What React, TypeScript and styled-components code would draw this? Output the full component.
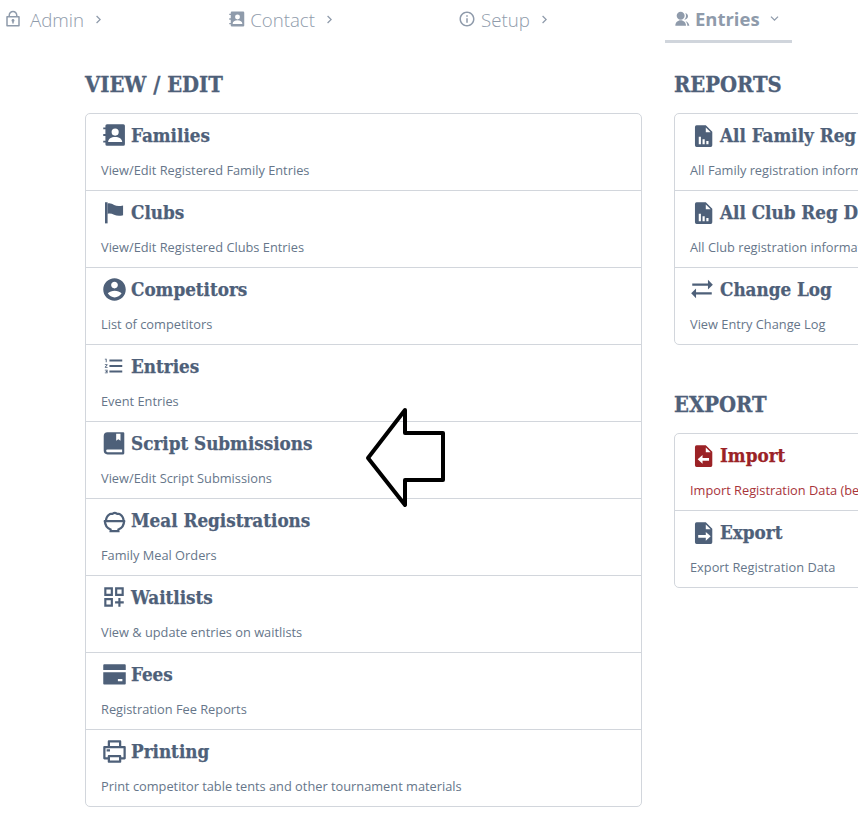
import React from "react";
import styled, { createGlobalStyle } from "styled-components";
import {
  RiAccountCircleFill, RiBankCardFill,
  RiPrinterLine,
  RiLock2Line, RiInformationLine, RiGroupFill, RiArrowRightSLine, RiArrowDownSLine,
} from "react-icons/ri";
import { MdOutlineDashboardCustomize, MdFormatListNumbered } from "react-icons/md";

const Global = createGlobalStyle`
  html, body { margin: 0; padding: 0; background: #fff; }
  body { width: 858px; height: 823px; overflow: hidden; font-family: "Open Sans", sans-serif; }
`;
const Page = styled.div`position: relative; width: 858px; height: 823px; overflow: hidden;`;
const Nav = styled.nav`display: flex; gap: 121px; height: 44px; padding-left: 4px; box-sizing: border-box; white-space: nowrap;`;
const NavItem = styled.div<{ $active?: boolean }>`
  display: flex; align-items: center; height: 40px; padding-bottom: 2px; box-sizing: border-box;
  font-size: 18.7px; color: #8f9bab; flex: none; font-weight: 300;
  ${(p) => p.$active && `font-weight: 700; font-size: 18.5px; margin-left: -8px; padding: 0 10px 3px 9px; border-bottom: 3px solid #d0d5dc; height: 43px;`}
`;
const NavIcon = styled.span<{ $gap: number; $size?: number }>`
  display: flex; margin-right: ${(p) => p.$gap}px; font-size: ${(p) => p.$size ?? 16}px;
`;
const NavChevron = styled.span`display: flex; margin-left: 7px; font-size: 15px;`;
const Columns = styled.main`display: flex; gap: 32px; width: 1146px; padding-left: 85px; margin-top: 25px;`;
const Column = styled.section`width: 557px; flex: none;`;
const Heading = styled.h2<{ $spaced?: boolean }>`
  margin: ${(p) => (p.$spaced ? "44px" : "0")} 0 12px; height: 32px;
  font: 700 21.8px/32px "DejaVu Serif Condensed", "DejaVu Serif", serif; color: #4e6079;
  -webkit-text-stroke: 0.3px currentColor;
`;
const Card = styled.div`border: 1px solid #d2d6dc; border-radius: 5px; background: #fff;`;
const Row = styled.div<{ $danger?: boolean }>`
  height: 76px; padding: 0 15px; color: ${(p) => (p.$danger ? "#9b2226" : "#4e6079")};
  & + & { border-top: 1px solid #d2d6dc; }
  white-space: nowrap; overflow: hidden;
`;
const Title = styled.div`
  display: flex; align-items: center; height: 28px; padding-top: 7px;
  font: 700 18.7px/28px "DejaVu Serif Condensed", "DejaVu Serif", serif;
  -webkit-text-stroke: 0.25px currentColor;
`;
const Icon = styled.span<{ $size?: number; $inset?: number }>`
  display: flex; align-items: center; box-sizing: border-box; width: 31px; height: 26px; flex: none; margin-left: -1px;
  font-size: ${(p) => p.$size ?? 26}px; padding-left: ${(p) => p.$inset ?? 0}px;
`;
const Desc = styled.div<{ $danger?: boolean }>`
  margin-top: 11px; font-size: 12.8px; line-height: 20px; color: ${(p) => (p.$danger ? "#a8343a" : "#66768a")};
`;
const Arrow = styled.svg`position: absolute; left: 360px; top: 402px;`;

type IconProps = { children: React.ReactNode };
const Glyph = ({ children }: IconProps) => (
  <svg width="1em" height="1em" viewBox="0 0 24 24" fill="currentColor">{children}</svg>
);
const ContactBookIcon = () => (
  <Glyph>
    <path fillRule="evenodd" d="M6.500 2H21.500A1.500 1.500 0 0 1 23 3.500v17a1.500 1.500 0 0 1-1.500 1.500H6.500A1.500 1.500 0 0 1 5 20.500v-1.500H3v-1.800h2v-4.300H3v-1.800h2V6.800H3V5h2V3.500A1.500 1.500 0 0 1 6.500 2zM14 6a3.300 3.300 0 1 0 0 6.600A3.300 3.300 0 0 0 14 6zm-6.500 12.500h13c0-3-2.900-4.700-6.500-4.700s-6.500 1.700-6.500 4.700z" />
  </Glyph>
);
const FlagIcon = () => (
  <Glyph>
    <path d="M4.600 3h2.400v19.500H4.600z" />
    <path d="M7 4.300c2-.8 4 .2 6 1.300 2.500 1.200 5.300 1.100 8.300.3V15c-3 .8-5.800.7-8.300-.4-2-.9-4-1.500-6-.8z" />
  </Glyph>
);
const BookIcon = () => (
  <Glyph>
    <path fillRule="evenodd" d="M6 2h14.500a1 1 0 0 1 1 1v18.500a1 1 0 0 1-1 1H6a3.500 3.500 0 0 1-3.500-3.500V5.500A3.500 3.500 0 0 1 6 2zm13.500 18.500v-2.500H6a1.250 1.250 0 0 0 0 2.500h13.500zM14 3.500V10l2-1.500L18 10V3.500h-4z" />
  </Glyph>
);
const BowlIcon = () => (
  <svg width="1em" height="1em" viewBox="0 0 24 24" fill="none" stroke="currentColor" strokeWidth="2">
    <path d="M2.500 12.500h19M4.500 12.500a7.500 7 0 0 1 3-6c1-.8 2 .2 3-.6 1-.8 2.500-.8 3.500 0 1 .8 2-.2 3 .6a7.500 7 0 0 1 3 6" />
    <path d="M3.500 12.500c0 4 2.500 6.500 5 7.500v1.500h7V20c2.500-1 5-3.500 5-7.500" />
  </svg>
);
const SwapIcon = () => (
  <Glyph>
    <path d="M3 7h14.500V3.500L22 8l-4.500 4.500V9H3zM21 15H6.500v-3.500L2 16l4.500 4.500V17H21z" />
  </Glyph>
);
const FILE = "M7 3h8.500l6 6v12.500a1.500 1.500 0 0 1-1.500 1.500H7a1.500 1.500 0 0 1-1.500-1.500v-17A1.500 1.500 0 0 1 7 3zM15.500 5v4.500h4.500z";
const ChartIcon = () => (
  <Glyph><path fillRule="evenodd" d={`${FILE}M9 13.500V20.500h2v-7zM12.500 16V20.500h2V16zM16 17.500v3h2v-3z`} /></Glyph>
);
const ImportIcon = () => (
  <Glyph><path fillRule="evenodd" d={`${FILE}M12.500 12v2.800h6v2.400h-6V20L8 16z`} /></Glyph>
);
const ExportIcon = () => (
  <Glyph><path fillRule="evenodd" d={`${FILE}M8.500 14.800h7V12l4.500 4-4.500 4v-2.800h-7z`} /></Glyph>
);

const left = [
  [<Icon><ContactBookIcon /></Icon>, "Families", "View/Edit Registered Family Entries"],
  [<Icon><FlagIcon /></Icon>, "Clubs", "View/Edit Registered Clubs Entries"],
  [<Icon $size={27} $inset={1}><RiAccountCircleFill /></Icon>, "Competitors", "List of competitors"],
  [<Icon $size={22} $inset={3}><MdFormatListNumbered /></Icon>, "Entries", "Event Entries"],
  [<Icon $inset={1}><BookIcon /></Icon>, "Script Submissions", "View/Edit Script Submissions"],
  [<Icon $size={27} $inset={1}><BowlIcon /></Icon>, "Meal Registrations", "Family Meal Orders"],
  [<Icon $size={26} $inset={1}><MdOutlineDashboardCustomize /></Icon>, "Waitlists", "View & update entries on waitlists"],
  [<Icon $size={27} $inset={1}><RiBankCardFill /></Icon>, "Fees", "Registration Fee Reports"],
  [<Icon $size={27} $inset={1}><RiPrinterLine /></Icon>, "Printing", "Print competitor table tents and other tournament materials"],
] as const;
const reports = [
  [<Icon><ChartIcon /></Icon>, "All Family Reg Data", "All Family registration information"],
  [<Icon><ChartIcon /></Icon>, "All Club Reg Data", "All Club registration information"],
  [<Icon><SwapIcon /></Icon>, "Change Log", "View Entry Change Log"],
] as const;

const List = ({ items }: { items: readonly (readonly [React.ReactNode, string, string])[] }) => (
  <Card>
    {items.map(([icon, title, desc]) => (
      <Row key={title}>
        <Title>{icon}{title}</Title>
        <Desc>{desc}</Desc>
      </Row>
    ))}
  </Card>
);

export default function App() {
  return (
    <Page>
      <Global />
      <Nav>
        <NavItem><NavIcon $gap={8} $size={18}><RiLock2Line /></NavIcon>Admin<NavChevron><RiArrowRightSLine /></NavChevron></NavItem>
        <NavItem><NavIcon $gap={5} $size={18}><ContactBookIcon /></NavIcon>Contact<NavChevron><RiArrowRightSLine /></NavChevron></NavItem>
        <NavItem><NavIcon $gap={5} $size={18}><RiInformationLine /></NavIcon>Setup<NavChevron><RiArrowRightSLine /></NavChevron></NavItem>
        <NavItem $active><NavIcon $gap={5}><RiGroupFill /></NavIcon>Entries<NavChevron><RiArrowDownSLine /></NavChevron></NavItem>
      </Nav>
      <Columns>
        <Column>
          <Heading>VIEW / EDIT</Heading>
          <List items={left} />
        </Column>
        <Column>
          <Heading>REPORTS</Heading>
          <List items={reports} />
          <Heading $spaced>EXPORT</Heading>
          <Card>
            <Row $danger>
              <Title><Icon><ImportIcon /></Icon>Import</Title>
              <Desc $danger>Import Registration Data (before)</Desc>
            </Row>
            <Row>
              <Title><Icon><ExportIcon /></Icon>Export</Title>
              <Desc>Export Registration Data</Desc>
            </Row>
          </Card>
        </Column>
      </Columns>
      <Arrow width="90" height="112" viewBox="0 0 90 112" fill="none">
        <path d="M45 8 L8 56 L45 103 L45 78 L83 78 L83 31 L45 31 Z" stroke="#000" strokeWidth="4" strokeLinejoin="round" />
      </Arrow>
    </Page>
  );
}
